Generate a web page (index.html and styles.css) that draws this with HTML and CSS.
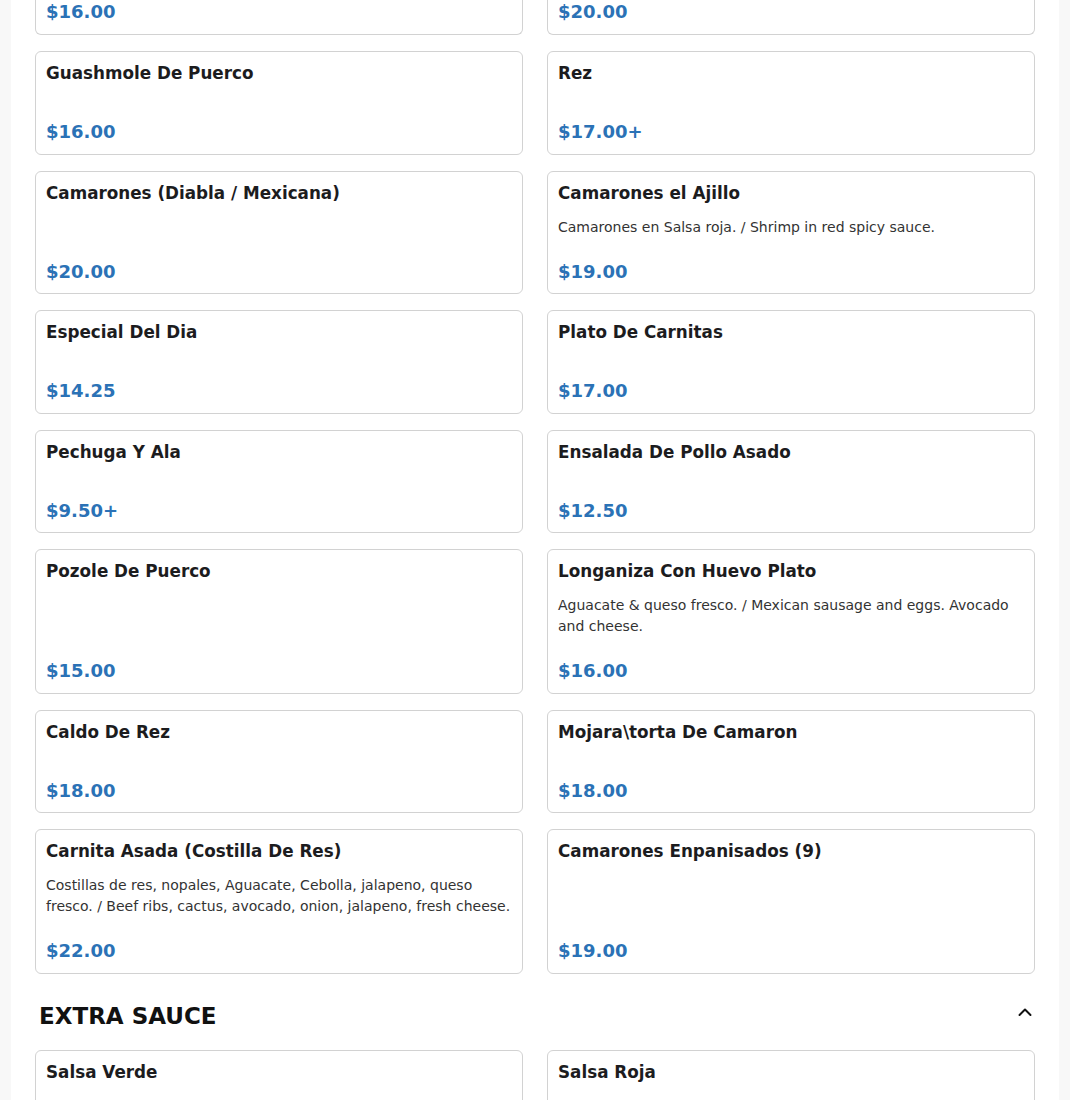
FILE: index.html
```html
<!DOCTYPE html>
<html lang="en">
<head>
<meta charset="utf-8">
<title>Menu</title>
<link rel="stylesheet" href="styles.css">
</head>
<body>
<main class="page">
  <section class="grid">
    <div class="card cut"><div class="price">$16.00</div></div>
    <div class="card cut"><div class="price">$20.00</div></div>

    <div class="card"><div class="title">Guashmole De Puerco</div><div class="desc"></div><div class="price">$16.00</div></div>
    <div class="card"><div class="title">Rez</div><div class="desc"></div><div class="price">$17.00+</div></div>

    <div class="card"><div class="title">Camarones (Diabla / Mexicana)</div><div class="desc"></div><div class="price">$20.00</div></div>
    <div class="card"><div class="title">Camarones el Ajillo</div><div class="desc">Camarones en Salsa roja. / Shrimp in red spicy sauce.</div><div class="price">$19.00</div></div>

    <div class="card"><div class="title">Especial Del Dia</div><div class="desc"></div><div class="price">$14.25</div></div>
    <div class="card"><div class="title">Plato De Carnitas</div><div class="desc"></div><div class="price">$17.00</div></div>

    <div class="card"><div class="title">Pechuga Y Ala</div><div class="desc"></div><div class="price">$9.50+</div></div>
    <div class="card"><div class="title">Ensalada De Pollo Asado</div><div class="desc"></div><div class="price">$12.50</div></div>

    <div class="card"><div class="title">Pozole De Puerco</div><div class="desc"></div><div class="price">$15.00</div></div>
    <div class="card"><div class="title">Longaniza Con Huevo Plato</div><div class="desc">Aguacate &amp; queso fresco. / Mexican sausage and eggs. Avocado and cheese.</div><div class="price">$16.00</div></div>

    <div class="card"><div class="title">Caldo De Rez</div><div class="desc"></div><div class="price">$18.00</div></div>
    <div class="card"><div class="title">Mojara\torta De Camaron</div><div class="desc"></div><div class="price">$18.00</div></div>

    <div class="card"><div class="title">Carnita Asada (Costilla De Res)</div><div class="desc">Costillas de res, nopales, Aguacate, Cebolla, jalapeno, queso fresco. / Beef ribs, cactus, avocado, onion, jalapeno, fresh cheese.</div><div class="price">$22.00</div></div>
    <div class="card"><div class="title">Camarones Enpanisados (9)</div><div class="desc"></div><div class="price">$19.00</div></div>
  </section>

  <header class="section-head">
    <h2 class="section-title">EXTRA SAUCE</h2>
    <svg class="chevron" width="14" height="10" viewBox="0 0 14 10" aria-hidden="true"><polyline points="1.5,8 7,2.5 12.5,8" fill="none" stroke="#111" stroke-width="2" stroke-linecap="round" stroke-linejoin="round"/></svg>
  </header>

  <section class="grid">
    <div class="card"><div class="title">Salsa Verde</div><div class="desc"></div><div class="price">$1.00</div></div>
    <div class="card"><div class="title">Salsa Roja</div><div class="desc"></div><div class="price">$1.00</div></div>
  </section>
</main>
</body>
</html>
```

FILE: styles.css
```css
html, body {
  margin: 0;
  padding: 0;
}

body {
  background: #f8f8f8;
  font-family: "DejaVu Sans", sans-serif;
  color: #1c1c1e;
}

.page {
  width: 1048px;
  margin: 0 auto;
  background: #ffffff;
  padding: 0 24px 40px;
  box-sizing: border-box;
  min-height: 1100px;
}

.grid {
  display: grid;
  grid-template-columns: 1fr 1fr;
  column-gap: 24px;
  row-gap: 16px;
}

.card {
  display: flex;
  flex-direction: column;
  border: 1px solid #d2d2d2;
  border-radius: 6px;
  padding: 11px 10px 11.5px;
  background: #fff;
}

.card.cut {
  border-top: none;
  border-radius: 0 0 6px 6px;
  padding-top: 1px;
  padding-bottom: 12px;
}

.title {
  font-size: 16.8px;
  font-weight: bold;
  line-height: 20px;
  color: #1c1c1e;
}

.desc {
  margin-top: 14px;
  min-height: 1px;
  font-size: 14px;
  line-height: 21px;
  color: #333333;
}

.price {
  margin-top: auto;
  padding-top: 23px;
  font-size: 18px;
  font-weight: bold;
  line-height: 21px;
  color: #2b72b6;
}

.card.cut .price {
  padding-top: 0;
}

.section-head {
  display: flex;
  justify-content: space-between;
  align-items: flex-start;
  margin: 29px 0 20px;
  padding: 0 3px 0 4px;
}

.section-title {
  margin: 0;
  font-size: 23px;
  line-height: 27px;
  font-weight: bold;
  color: #111111;
}

.chevron {
  margin-top: 4px;
}
```
